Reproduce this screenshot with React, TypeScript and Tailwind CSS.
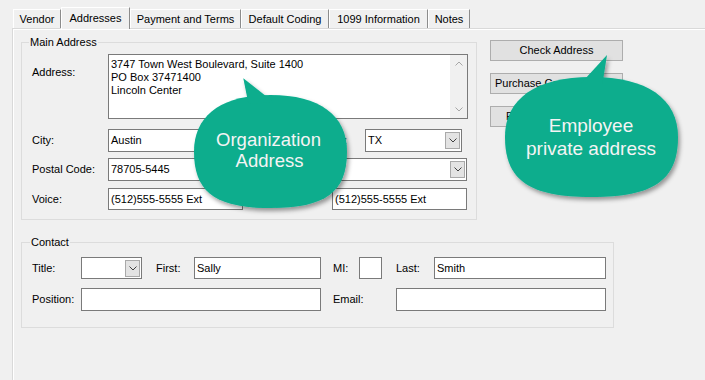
import React from "react";

function Chevron({ up = false, color = "#404040" }: { up?: boolean; color?: string }) {
  return (
    <svg width="8" height="5" viewBox="0 0 8 5" className="block">
      <path
        d={up ? "M0.5 4.5 L4 1 L7.5 4.5" : "M0.5 0.5 L4 4 L7.5 0.5"}
        fill="none"
        stroke={color}
        strokeWidth="1"
      />
    </svg>
  );
}

function DropButton() {
  return (
    <div className="w-[15px] h-[17px] shrink-0 border border-[#a9a9a9] bg-[#e3e3e3] flex items-center justify-center">
      <Chevron />
    </div>
  );
}

function Field({ className, text, drop }: { className: string; text?: string; drop?: boolean }) {
  return (
    <div
      className={`${className} shrink-0 border border-[#7a7a7a] bg-white flex items-center justify-between pl-[2px] pr-[1px]`}
    >
      <span className="whitespace-nowrap">{text}</span>
      {drop && <DropButton />}
    </div>
  );
}

function Tab({ label, className, active }: { label: string; className: string; active?: boolean }) {
  return (
    <div
      className={`${className} shrink-0 flex items-center justify-center border-t border-l border-white border-r border-r-[#8c8c8c] bg-[#f0f0f0] ${
        active ? "h-[22px] -mb-px relative z-10" : "h-[19px]"
      }`}
    >
      {label}
    </div>
  );
}

// rounded bubble: a bit squarer than an ellipse, flatter on the bottom
function blob(cx: number, cy: number, rx: number, ry: number, kt = 0.64, kb = 0.72) {
  const at = kt * rx;
  const bt = kt * ry;
  const ab = kb * rx;
  const bb = kb * ry;
  return `M${cx},${cy - ry} C${cx + at},${cy - ry} ${cx + rx},${cy - bt} ${cx + rx},${cy} C${cx + rx},${cy + bb} ${cx + ab},${cy + ry} ${cx},${cy + ry} C${cx - ab},${cy + ry} ${cx - rx},${cy + bb} ${cx - rx},${cy} C${cx - rx},${cy - bt} ${cx - at},${cy - ry} ${cx},${cy - ry} Z`;
}

function Callouts() {
  const teal = "#08ad8d";
  const txt = "#f4f4f4";
  const ff = "'Liberation Sans', Arial, sans-serif";
  return (
    <svg className="absolute left-0 top-0 w-[705px] h-[380px] pointer-events-none" viewBox="0 0 705 380">
      <defs>
        <filter id="sh" x="-20%" y="-20%" width="140%" height="140%">
          <feDropShadow dx="2" dy="3" stdDeviation="2.2" floodColor="#000" floodOpacity="0.38" />
        </filter>
      </defs>
      <g filter="url(#sh)" fill={teal}>
        <path d={blob(270.5, 151.5, 76.5, 56.5)} />
        <path d="M243.3,78.3 L248.5,104 L273.4,102 Z" />
      </g>
      <g filter="url(#sh)" fill={teal}>
        <path d={blob(591.5, 137, 86.5, 60)} />
        <path d="M607,55 L580.4,84 L602.4,84 Z" />
      </g>
      <g fill={txt} fontFamily={ff} textAnchor="middle">
        <text x="268.5" y="146" fontSize="18.5">Organization</text>
        <text x="269.5" y="167" fontSize="18.5">Address</text>
        <text x="591" y="132" fontSize="19">Employee</text>
        <text x="591" y="155" fontSize="19">private address</text>
      </g>
    </svg>
  );
}

export default function App() {
  return (
    <div className="relative w-[705px] h-[380px] overflow-hidden bg-[#f0f0f0] text-[11px] leading-[13px] text-black font-['Liberation_Sans',Arial,sans-serif] flex flex-col">
      {/* tab strip */}
      <div className="h-[28px] shrink-0 flex items-end pl-[13px]">
        <Tab label="Vendor" className="w-[48px]" />
        <Tab label="Addresses" className="w-[69px]" active />
        <Tab label="Payment and Terms" className="w-[111px]" />
        <Tab label="Default Coding" className="w-[88px]" />
        <Tab label="1099 Information" className="w-[99px]" />
        <Tab label="Notes" className="w-[42px]" />
      </div>

      {/* tab page */}
      <div className="flex-1 ml-[12px] border-t border-l border-[#d9d9d9] shadow-[inset_1px_1px_0_#ffffff] pt-[7px] pl-[8px]">
        <div className="flex gap-[13px]">
          <fieldset className="w-[456px] h-[184px] border border-[#dcdcdc] p-0 m-0">
            <legend className="ml-[7px] px-[1px] leading-[13px]">Main Address</legend>
            <div className="pl-[10px] pt-[5px]">
              <div className="flex">
                <div className="w-[76px] shrink-0 pt-[12px]">Address:</div>
                <div className="w-[360px] h-[65px] shrink-0 border border-[#7a7a7a] bg-white flex">
                  <div className="flex-1 pl-[2px] pt-[3px] whitespace-nowrap">
                    <div>3747 Town West Boulevard, Suite 1400</div>
                    <div>PO Box 37471400</div>
                    <div>Lincoln Center</div>
                  </div>
                  <div className="w-[17px] bg-[#f0f0f0] flex flex-col items-center justify-between py-[6px]">
                    <Chevron up color="#a6a6a6" />
                    <Chevron color="#a6a6a6" />
                  </div>
                </div>
              </div>

              <div className="flex items-center mt-[10px]">
                <div className="w-[76px] shrink-0">City:</div>
                <Field className="w-[193px] h-[23px]" text="Austin" />
                <div className="w-[64px] shrink-0 text-right pr-[18px]">State:</div>
                <Field className="w-[97px] h-[23px]" text="TX" drop />
              </div>

              <div className="flex items-center mt-[6px]">
                <div className="w-[76px] shrink-0">Postal Code:</div>
                <Field className="w-[135px] h-[23px]" text="78705-5445" />
                <div className="w-[89px] shrink-0 text-right pr-[14px]">Country:</div>
                <Field className="w-[135px] h-[23px]" text="" drop />
              </div>

              <div className="flex items-center mt-[7px]">
                <div className="w-[76px] shrink-0">Voice:</div>
                <Field className="w-[135px] h-[22px]" text="(512)555-5555 Ext" />
                <div className="w-[89px] shrink-0 text-right pr-[26px]">Fax:</div>
                <Field className="w-[135px] h-[22px]" text="(512)555-5555 Ext" />
              </div>
            </div>
          </fieldset>

          <div className="w-[133px] mt-[4px] flex flex-col gap-[12px]">
            <div className="h-[21px] border border-[#adadad] bg-[#e1e1e1] flex items-center justify-center">
              Check Address
            </div>
            <div className="h-[21px] border border-[#adadad] bg-[#e1e1e1] flex items-center pl-[4px] whitespace-nowrap overflow-hidden">
              Purchase Contact
            </div>
            <div className="h-[21px] border border-[#adadad] bg-[#e1e1e1] flex items-center justify-center whitespace-nowrap overflow-hidden">
              Print Address Labels
            </div>
          </div>
        </div>

        <fieldset className="w-[593px] h-[92px] mt-[16px] border border-[#dcdcdc] p-0 m-0">
          <legend className="ml-[8px] px-[1px] leading-[13px]">Contact</legend>
          <div className="pl-[10px] pt-[8px]">
            <div className="flex items-center">
              <div className="w-[49px] shrink-0">Title:</div>
              <Field className="w-[61px] h-[22px]" text="" drop />
              <div className="w-[38px] shrink-0 ml-[14px]">First:</div>
              <Field className="w-[127px] h-[22px]" text="Sally" />
              <div className="w-[26px] shrink-0 ml-[12px]">MI:</div>
              <Field className="w-[23px] h-[22px]" text="" />
              <div className="w-[38px] shrink-0 ml-[14px]">Last:</div>
              <Field className="w-[172px] h-[22px]" text="Smith" />
            </div>
            <div className="flex items-center mt-[9px]">
              <div className="w-[49px] shrink-0">Position:</div>
              <Field className="w-[240px] h-[23px]" text="" />
              <div className="w-[63px] shrink-0 ml-[12px]">Email:</div>
              <Field className="w-[210px] h-[23px]" text="" />
            </div>
          </div>
        </fieldset>
      </div>

      <Callouts />
    </div>
  );
}
